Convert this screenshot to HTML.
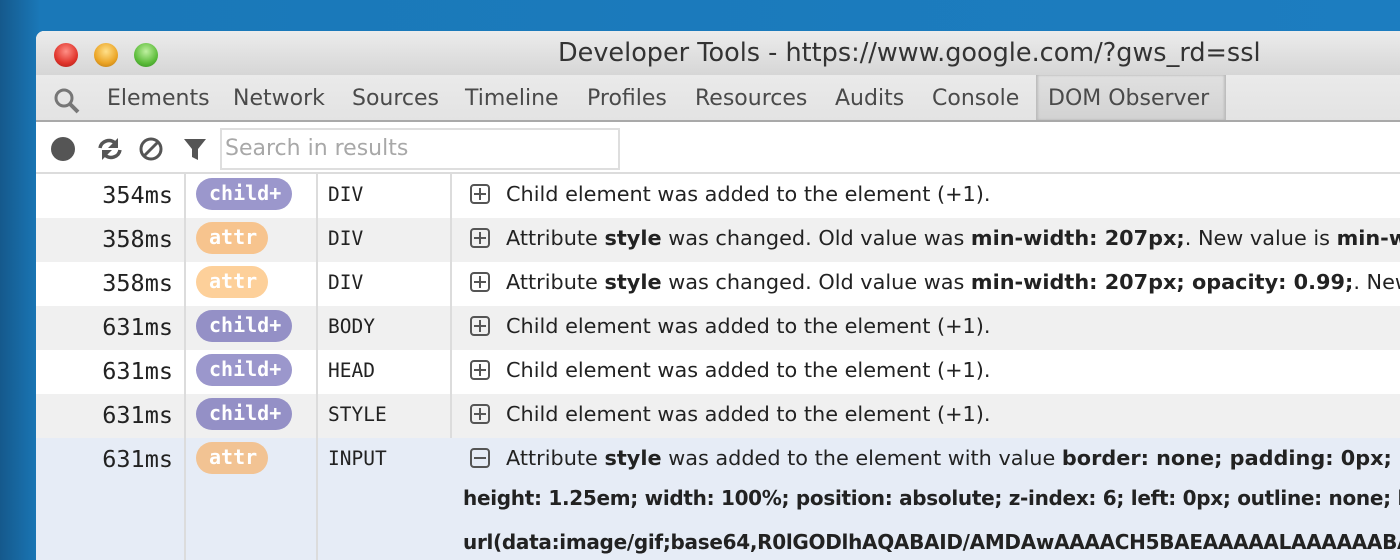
<!DOCTYPE html>
<html><head><style>
*{margin:0;padding:0;box-sizing:border-box}
html,body{width:1400px;height:560px;overflow:hidden}
body{background:linear-gradient(90deg,#15598c 0,#1a78b8 40px,#1c7dc0 100%);font-family:"DejaVu Sans","Liberation Sans",sans-serif;position:relative}
.win{position:absolute;left:36px;top:31px;width:1364px;height:529px;background:#fff;border-radius:8px 0 0 0;overflow:hidden}
.title{position:absolute;left:0;top:0;width:100%;height:44px;background:linear-gradient(#ececec,#d6d6d6);}
.title .t{position:absolute;left:522px;top:7px;font-size:25.5px;color:#333;white-space:nowrap}
.dot{position:absolute;top:12px;width:24px;height:24px;border-radius:50%}
.tabs{position:absolute;left:0;top:44px;width:100%;height:47px;background:linear-gradient(#eaeaea,#e3e3e3);border-bottom:2px solid #a9a9a9}
.tab{position:absolute;top:11px;font-size:22px;color:#4a4a4a;white-space:nowrap}
.sel{position:absolute;left:1000px;top:0;width:190px;height:45px;background:linear-gradient(#e0e0e0,#d2d2d2);box-shadow:inset 2px 0 2px #bbb,inset -2px 0 2px #bbb}
.tool{position:absolute;left:0;top:93px;width:100%;height:50px;background:#fff;border-bottom:2px solid #dcdcdc}
.search{position:absolute;left:184px;top:4px;width:400px;height:42px;border:2px solid #dedede;font-size:22px;color:#a8a8a8;padding:6px 3px}
.row{position:absolute;left:0;width:100%;height:44px;overflow:hidden}
.tm{position:absolute;right:1227px;top:7px;font-family:"DejaVu Sans Mono",monospace;font-size:23.5px;color:#222;text-align:right}
.b{position:absolute;left:160px;top:4px;height:32px;border-radius:16px;font-family:"DejaVu Sans Mono",monospace;font-weight:bold;font-size:20px;color:#fff;padding:3px 0 0 13px}
.c{width:96px;background:#9b97cc}
.a{width:72px;background:#fdd09a}
.tg{position:absolute;left:292px;top:9px;font-family:"DejaVu Sans Mono",monospace;font-size:19.5px;color:#222}
.ic{position:absolute;left:434px;top:10px;width:20px;height:20px;border:2px solid #555;border-radius:4px}
.ic:before{content:"";position:absolute;left:2px;top:7px;width:12px;height:2px;background:#555}
.ic.p:after{content:"";position:absolute;left:7px;top:2px;width:2px;height:12px;background:#555}
.d{position:absolute;left:470px;top:8px;font-size:20.8px;color:#222;white-space:nowrap}
.l2{position:absolute;left:427px;font-size:20px;color:#222;white-space:nowrap;font-weight:bold;letter-spacing:-0.3px}
.v{position:absolute;top:143px;width:2px;height:386px;background:#dcdcdc;z-index:5}
</style></head><body>
<div class="win">
<div class="title">
<div class="dot" style="left:18px;background:radial-gradient(circle at 50% 35%,#ff8f86,#e0342b 60%,#a51d16)"></div>
<div class="dot" style="left:58px;background:radial-gradient(circle at 50% 35%,#ffe08a,#eba425 60%,#b07212)"></div>
<div class="dot" style="left:98px;background:radial-gradient(circle at 50% 35%,#bff0a0,#5cbc3a 60%,#2f8a1e)"></div>
<div class="t">Developer Tools - https://www.google.com/?gws_rd=ssl</div>
</div>
<div class="tabs">
<div class="sel"></div>
<svg style="position:absolute;left:17px;top:12px" width="28" height="28" viewBox="0 0 28 28"><circle cx="11" cy="11" r="8" fill="none" stroke="#777" stroke-width="3"/><line x1="17" y1="17" x2="25" y2="25" stroke="#777" stroke-width="4"/></svg>
<div class="tab" style="left:71px">Elements</div>
<div class="tab" style="left:197px">Network</div>
<div class="tab" style="left:316px">Sources</div>
<div class="tab" style="left:429px">Timeline</div>
<div class="tab" style="left:551px">Profiles</div>
<div class="tab" style="left:659px">Resources</div>
<div class="tab" style="left:799px">Audits</div>
<div class="tab" style="left:896px">Console</div>
<div class="tab" style="left:1012px">DOM Observer</div>
</div>
<div class="tool">
<svg style="position:absolute;left:14px;top:12px" width="170" height="26" viewBox="0 0 170 26">
<circle cx="13" cy="13" r="12" fill="#555"/>
<path d="M50 12 A9 9 0 0 1 65 7" fill="none" stroke="#555" stroke-width="3.5"/>
<path d="M68 2 V12 H58z" fill="#555"/>
<path d="M70 14 A9 9 0 0 1 55 19" fill="none" stroke="#555" stroke-width="3.5"/>
<path d="M52 24 V14 H62z" fill="#555"/>
<circle cx="101" cy="13" r="10" fill="none" stroke="#555" stroke-width="3"/><line x1="94" y1="20" x2="108" y2="6" stroke="#555" stroke-width="3"/>
<path d="M134 3 h22 l-8 10 v11 l-6 -3 v-8z" fill="#555"/>
</svg>
<div class="search">Search in results</div>
</div>

<div class="row" style="top:143px;background:#fff"><div class="tm">354ms</div><div class="b c">child+</div><div class="tg">DIV</div><div class="ic p"></div><div class="d">Child element was added to the element (+1).</div></div>
<div class="row" style="top:187px;background:#f0f0f0"><div class="tm">358ms</div><div class="b a" style="background:#f7c48e">attr</div><div class="tg">DIV</div><div class="ic p"></div><div class="d">Attribute <b>style</b> was changed. Old value was <b>min-width: 207px;</b>. New value is <b>min-width</b></div></div>
<div class="row" style="top:231px;background:#fff"><div class="tm">358ms</div><div class="b a">attr</div><div class="tg">DIV</div><div class="ic p"></div><div class="d">Attribute <b>style</b> was changed. Old value was <b>min-width: 207px; opacity: 0.99;</b>. New value</div></div>
<div class="row" style="top:275px;background:#f0f0f0"><div class="tm">631ms</div><div class="b c" style="background:#9490c6">child+</div><div class="tg">BODY</div><div class="ic p"></div><div class="d">Child element was added to the element (+1).</div></div>
<div class="row" style="top:319px;background:#fff"><div class="tm">631ms</div><div class="b c">child+</div><div class="tg">HEAD</div><div class="ic p"></div><div class="d">Child element was added to the element (+1).</div></div>
<div class="row" style="top:363px;background:#f0f0f0"><div class="tm">631ms</div><div class="b c" style="background:#9490c6">child+</div><div class="tg">STYLE</div><div class="ic p"></div><div class="d">Child element was added to the element (+1).</div></div>
<div class="row" style="top:407px;height:122px;background:#e6ecf6"><div class="tm">631ms</div><div class="b a" style="background:#f2c393">attr</div><div class="tg">INPUT</div><div class="ic"></div><div class="d">Attribute <b>style</b> was added to the element with value <b>border: none; padding: 0px; margin</b></div>
<div class="l2" style="top:48px">height: 1.25em; width: 100%; position: absolute; z-index: 6; left: 0px; outline: none; background:</div>
<div class="l2" style="top:92px">url(data:image/gif;base64,R0lGODlhAQABAID/AMDAwAAAACH5BAEAAAAALAAAAAABAAEAAAICRAEAOw%3D%3D)</div>
</div>
<div class="v" style="left:148px"></div><div class="v" style="left:280px"></div><div class="v" style="left:414px;height:264px"></div>
</div>
</body></html>
